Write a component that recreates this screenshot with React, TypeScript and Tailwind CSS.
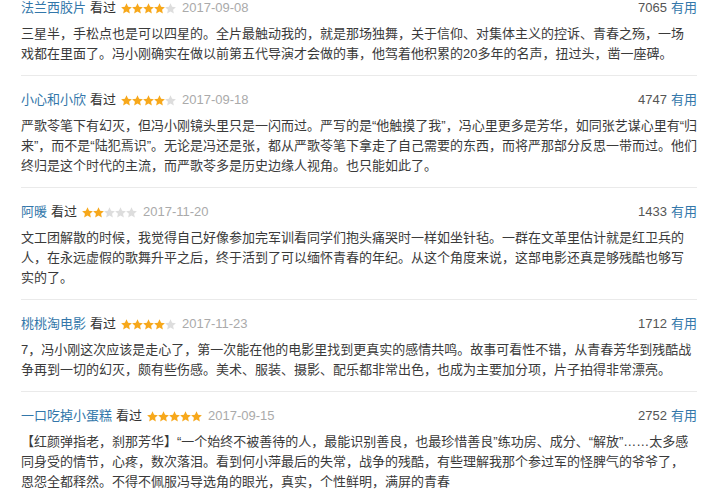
import React from 'react';

interface Review {
  name: string;
  stars: number;
  date: string;
  votes: number;
  lines: string[];
}

const reviews: Review[] = [
  {
    name: '法兰西胶片',
    stars: 4,
    date: '2017-09-08',
    votes: 7065,
    lines: [
      '三星半，手松点也是可以四星的。全片最触动我的，就是那场独舞，关于信仰、对集体主义的控诉、青春之殇，一场',
      '戏都在里面了。冯小刚确实在做以前第五代导演才会做的事，他驾着他积累的20多年的名声，扭过头，凿一座碑。',
    ],
  },
  {
    name: '小心和小欣',
    stars: 4,
    date: '2017-09-18',
    votes: 4747,
    lines: [
      '严歌苓笔下有幻灭，但冯小刚镜头里只是一闪而过。严写的是“他触摸了我”，冯心里更多是芳华，如同张艺谋心里有“归',
      '来”，而不是“陆犯焉识”。无论是冯还是张，都从严歌苓笔下拿走了自己需要的东西，而将严那部分反思一带而过。他们',
      '终归是这个时代的主流，而严歌苓多是历史边缘人视角。也只能如此了。',
    ],
  },
  {
    name: '阿暖',
    stars: 2,
    date: '2017-11-20',
    votes: 1433,
    lines: [
      '文工团解散的时候，我觉得自己好像参加完军训看同学们抱头痛哭时一样如坐针毡。一群在文革里估计就是红卫兵的',
      '人，在永远虚假的歌舞升平之后，终于活到了可以缅怀青春的年纪。从这个角度来说，这部电影还真是够残酷也够写',
      '实的了。',
    ],
  },
  {
    name: '桃桃淘电影',
    stars: 4,
    date: '2017-11-23',
    votes: 1712,
    lines: [
      '7，冯小刚这次应该是走心了，第一次能在他的电影里找到更真实的感情共鸣。故事可看性不错，从青春芳华到残酷战',
      '争再到一切的幻灭，颇有些伤感。美术、服装、摄影、配乐都非常出色，也成为主要加分项，片子拍得非常漂亮。',
    ],
  },
  {
    name: '一口吃掉小蛋糕',
    stars: 5,
    date: '2017-09-15',
    votes: 2752,
    lines: [
      '【红颜弹指老，刹那芳华】“一个始终不被善待的人，最能识别善良，也最珍惜善良”练功房、成分、“解放”……太多感',
      '同身受的情节，心疼，数次落泪。看到何小萍最后的失常，战争的残酷，有些理解我那个参过军的怪脾气的爷爷了，',
      '恩怨全都释然。不得不佩服冯导选角的眼光，真实，个性鲜明，满屏的青春',
    ],
  },
];

function Stars({ count }: { count: number }) {
  return (
    <span className="flex items-center">
      {[0, 1, 2, 3, 4].map((i) => (
        <svg key={i} viewBox="0 0 24 24" className="w-[11px] h-[11px]">
          <path
            d="M12 0.5l3.5 7.6 8.2.9-6.1 5.6 1.7 8.1L12 18.6l-7.3 4.1 1.7-8.1L.3 9l8.2-.9z"
            fill={i < count ? '#f7a81b' : '#dddddd'}
          />
        </svg>
      ))}
    </span>
  );
}

export default function App() {
  return (
    <div className="min-h-screen bg-white font-['Liberation_Sans','Noto_Sans_CJK_SC',sans-serif] text-[13px]">
      <div className="w-[676px] ml-[21px]">
        {reviews.map((r, idx) => (
          <div
            key={r.name}
            className={`${idx === 0 ? 'pt-0' : 'pt-[16px]'} pb-[11px] ${idx < reviews.length - 1 ? 'border-b border-[#eaeaea]' : ''}`}
          >
            <div className="flex items-center justify-between h-[16px] leading-[16px]">
              <div className="flex items-center">
                <span className="text-[#3377aa]">{r.name}</span>
                <span className="ml-[4px] text-[#333]">看过</span>
                <span className="ml-[5px]">
                  <Stars count={r.stars} />
                </span>
                <span className="ml-[6px] text-[#aaa]">{r.date}</span>
              </div>
              <div className="flex items-center">
                <span className="text-[#555]">{r.votes}</span>
                <span className="ml-[4px] text-[#3377aa]">有用</span>
              </div>
            </div>
            <div className="mt-[8px] text-[#3a3a3a] leading-[20px]">
              {r.lines.map((line, i) => (
                <div key={i} className="whitespace-nowrap">
                  {line}
                </div>
              ))}
            </div>
          </div>
        ))}
      </div>
    </div>
  );
}
